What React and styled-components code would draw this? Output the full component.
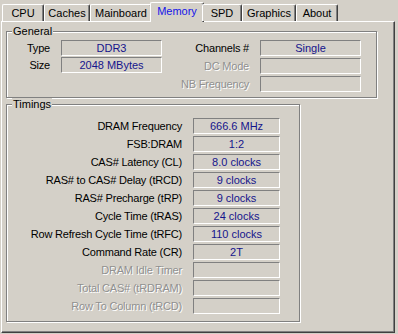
import React from "react";
import styled, { createGlobalStyle, css } from "styled-components";

const Global = createGlobalStyle`
  html, body { margin: 0; padding: 0; background: #d4d0c8; }
  body { font-family: "Liberation Sans", Arial, sans-serif; font-size: 11px; color: #000; }
`;

const Window = styled.div`
  width: 398px;
  height: 334px;
  padding-top: 2px;
  box-sizing: border-box;
  background: #d4d0c8;
  overflow: hidden;
`;

const TabBar = styled.div`
  display: flex;
  align-items: flex-end;
  height: 20px;
  padding-left: 2px;
  margin-bottom: -1px;
  position: relative;
  z-index: 1;
`;

const Tab = styled.div`
  box-sizing: border-box;
  width: ${(p) => p.$w}px;
  height: 17px;
  margin-bottom: 1px;
  border-top: 1px solid #fff;
  border-left: 1px solid #fff;
  border-right: 1px solid #404040;
  border-radius: 2px 2px 0 0;
  box-shadow: inset -1px 0 0 #808080;
  background: #d4d0c8;
  display: flex;
  align-items: center;
  justify-content: center;
  padding-bottom: 1px;
  color: #000;
  white-space: nowrap;
  ${(p) =>
    p.$active &&
    css`
      height: 20px;
      margin: 0 -2px;
      width: ${p.$w + 4}px;
      color: #1414e8;
      padding-bottom: 3px;
    `}
`;

const Panel = styled.div`
  box-sizing: border-box;
  width: 394px;
  height: 312px;
  margin-left: 1px;
  border-top: 1px solid #fff;
  border-left: 1px solid #fff;
  border-right: 1px solid #404040;
  border-bottom: 1px solid #404040;
  box-shadow: inset -1px -1px 0 #808080;
  padding: 9px 0 0 4px;
  display: flex;
  flex-direction: column;
  align-items: flex-start;
  gap: 6px;
`;

const Group = styled.div`
  position: relative;
  box-sizing: border-box;
  width: ${(p) => p.$w}px;
  height: ${(p) => p.$h}px;
  border: 1px solid #808080;
  box-shadow: inset 1px 1px 0 #fff, 1px 1px 0 #fff;
  padding-top: ${(p) => p.$pt}px;
`;

const Legend = styled.span`
  position: absolute;
  top: -7px;
  left: 5px;
  padding: 0 1px;
  line-height: 13px;
  background: #d4d0c8;
  color: #000;
`;

const GeneralBody = styled.div`
  display: flex;
  align-items: flex-start;
  gap: 7px;
`;

const FieldGrid = styled.div`
  display: grid;
  grid-template-columns: ${(p) => p.$label}px ${(p) => p.$field}px;
  column-gap: 11px;
  row-gap: ${(p) => p.$gap}px;
`;

const Label = styled.div`
  height: 16px;
  line-height: 16px;
  text-align: right;
  white-space: nowrap;
  letter-spacing: -0.2px;
  color: #000;
  ${(p) =>
    p.$disabled &&
    css`
      color: #909090;
      text-shadow: 1px 1px 0 #fff;
    `}
`;

const Field = styled.div`
  box-sizing: border-box;
  height: 16px;
  border-top: 1px solid #808080;
  border-left: 1px solid #808080;
  border-bottom: 1px solid #fff;
  border-right: 1px solid #fff;
  line-height: 14px;
  text-align: center;
  color: #14148c;
  white-space: nowrap;
`;

const left = [
  ["Type", "DDR3"],
  ["Size", "2048 MBytes"],
];
const right = [
  ["Channels #", "Single"],
  ["DC Mode", null],
  ["NB Frequency", null],
];
const timings = [
  ["DRAM Frequency", "666.6 MHz"],
  ["FSB:DRAM", "1:2"],
  ["CAS# Latency (CL)", "8.0 clocks"],
  ["RAS# to CAS# Delay (tRCD)", "9 clocks"],
  ["RAS# Precharge (tRP)", "9 clocks"],
  ["Cycle Time (tRAS)", "24 clocks"],
  ["Row Refresh Cycle Time (tRFC)", "110 clocks"],
  ["Command Rate (CR)", "2T"],
  ["DRAM Idle Timer", null],
  ["Total CAS# (tRDRAM)", null],
  ["Row To Column (tRCD)", null],
];

const tabs = [
  ["CPU", 42],
  ["Caches", 46],
  ["Mainboard", 62],
  ["Memory", 50],
  ["SPD", 40],
  ["Graphics", 54],
  ["About", 42],
];

function Rows({ items }) {
  return items.map(([l, v]) => (
    <React.Fragment key={l}>
      <Label $disabled={v === null}>{l}</Label>
      <Field>{v}</Field>
    </React.Fragment>
  ));
}

export default function App() {
  return (
    <Window>
      <Global />
      <TabBar>
        {tabs.map(([t, w]) => (
          <Tab key={t} $w={w} $active={t === "Memory"}>
            {t}
          </Tab>
        ))}
      </TabBar>
      <Panel>
        <Group $w={371} $h={67} $pt={8}>
          <Legend>General</Legend>
          <GeneralBody>
            <FieldGrid $label={43} $field={101} $gap={1}>
              <Rows items={left} />
            </FieldGrid>
            <FieldGrid $label={80} $field={101} $gap={2}>
              <Rows items={right} />
            </FieldGrid>
          </GeneralBody>
        </Group>
        <Group $w={294} $h={218} $pt={13}>
          <Legend>Timings</Legend>
          <FieldGrid $label={175} $field={87} $gap={2}>
            <Rows items={timings} />
          </FieldGrid>
        </Group>
      </Panel>
    </Window>
  );
}
